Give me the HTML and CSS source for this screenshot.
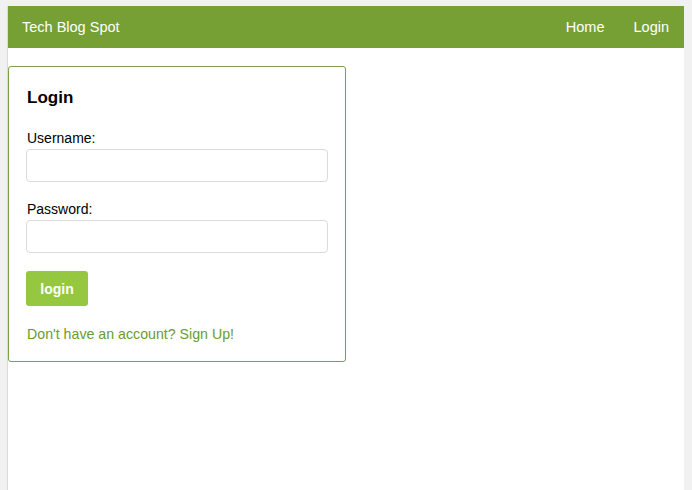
FILE: index.html
```html
<!DOCTYPE html>
<html lang="en">
<head>
<meta charset="utf-8">
<title>Tech Blog Spot - Login</title>
<link rel="stylesheet" href="styles.css">
</head>
<body>
<div class="viewport">
  <header class="navbar">
    <a class="brand" href="#">Tech Blog Spot</a>
    <nav class="nav-links">
      <a href="#">Home</a>
      <a href="#">Login</a>
    </nav>
  </header>
  <main class="main">
    <section class="card">
      <h2 class="card-title">Login</h2>
      <form class="login-form">
        <label class="field-label" for="username">Username:</label>
        <input class="field-input" id="username" type="text">
        <label class="field-label" for="password">Password:</label>
        <input class="field-input" id="password" type="password">
        <button class="btn" type="button">login</button>
      </form>
      <a class="signup-link" href="#">Don't have an account? Sign Up!</a>
    </section>
  </main>
</div>
</body>
</html>
```

FILE: styles.css
```css
* { box-sizing: border-box; }
html, body { height: 100%; }
body {
  margin: 0;
  background: #f0f1f0;
  font-family: "Helvetica Neue", Helvetica, "Liberation Sans", Arial, sans-serif;
  color: #000;
}
.viewport {
  margin: 6px 0 0 8px;
  width: 676px;
  height: calc(100% - 6px);
  background: #fff;
  box-shadow: -1px 0 0 #d9dad9;
}
.navbar {
  height: 42px;
  background: #76a034;
  display: flex;
  align-items: center;
  justify-content: space-between;
  padding: 0 15px 0 14px;
}
.navbar a {
  color: #fff;
  text-decoration: none;
  font-size: 14.5px;
}
.nav-links {
  display: flex;
  gap: 29px;
}
.main {
  padding-top: 18px;
}
.card {
  width: 338px;
  border: 1px solid #7c9f4b;
  border-radius: 3px;
  padding: 20px 17px 18px 17px;
}
.card-title {
  margin: 0 0 21px 1px;
  font-size: 17px;
  line-height: 22px;
  font-weight: 700;
}
.login-form {
  display: flex;
  flex-direction: column;
  align-items: flex-start;
}
.field-label {
  font-size: 14px;
  line-height: 17px;
  margin: 0 0 2px 1px;
}
.field-input {
  width: 302px;
  height: 33px;
  border: 1px solid #dadbde;
  border-radius: 4px;
  margin: 0 0 19px 0;
  font: inherit;
}
.field-input:last-of-type { margin-bottom: 18px; }
.btn {
  width: 62px;
  height: 35px;
  border: 0;
  border-radius: 3px;
  background: #95c840;
  color: #fff;
  font: 700 14px "Helvetica Neue", Helvetica, "Liberation Sans", Arial, sans-serif;
  padding: 0;
}
.signup-link {
  display: block;
  margin: 20px 0 0 1px;
  font-size: 14.2px;
  line-height: 17px;
  color: #6b9c2b;
  text-decoration: none;
}
```
